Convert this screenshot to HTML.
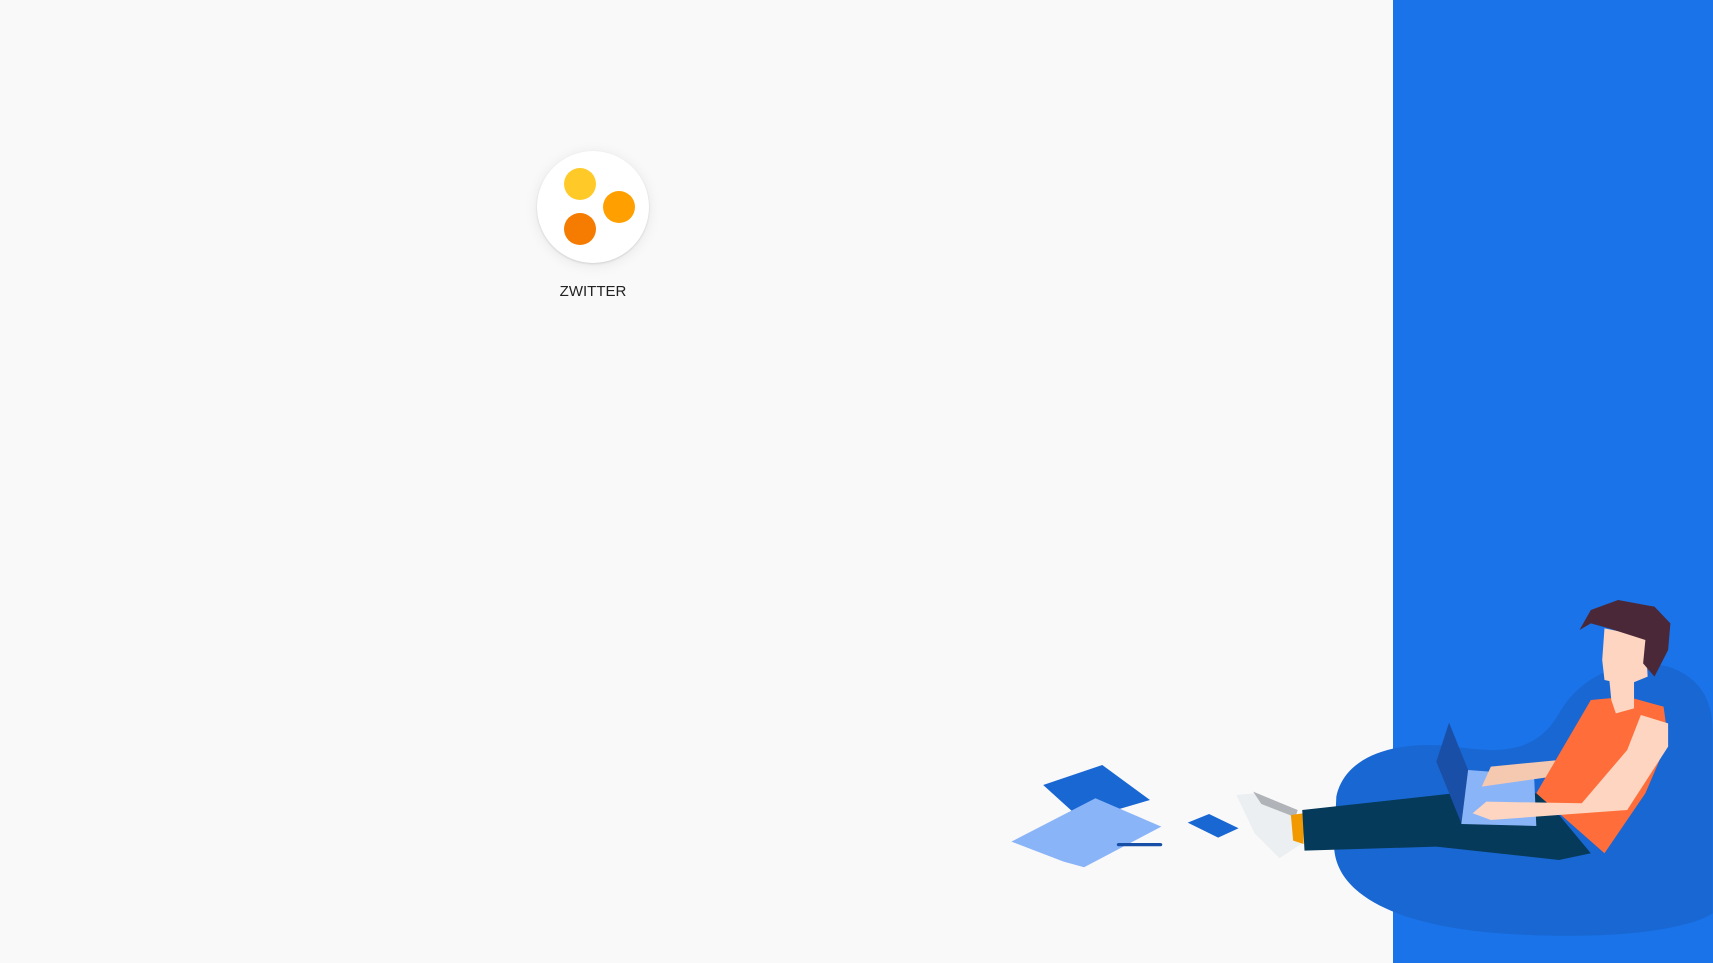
<!DOCTYPE html>
<html><head><meta charset="utf-8"><style>
html,body{margin:0;padding:0;width:1713px;height:963px;overflow:hidden;background:#f9f9f9;font-family:"Liberation Sans",Roboto,sans-serif}
.panel{position:absolute;left:1393px;top:0;width:320px;height:963px;background:#1a73e8}
.logo{position:absolute;left:537px;top:151px;width:112px;height:112px;border-radius:50%;background:#fff;box-shadow:0 2px 14px rgba(0,0,0,0.08),0 1px 2px rgba(0,0,0,0.12)}
.dot{position:absolute;width:32px;height:32px;border-radius:50%}
.lbl{position:absolute;left:493px;top:283px;width:200px;text-align:center;font-size:15px;color:#222}
svg{position:absolute;left:0;top:0}
</style></head><body>
<div class="panel"></div>
<div class="logo">
<div class="dot" style="left:27px;top:17px;background:#ffca28"></div>
<div class="dot" style="left:66px;top:40px;background:#ffa000"></div>
<div class="dot" style="left:27px;top:62px;background:#f57c00"></div>
</div>
<div class="lbl">ZWITTER</div>
<svg width="1713" height="963" viewBox="0 0 1713 963">
<g transform="translate(1000,580) scale(0.4545,0.3333)">
<path d="M740 650 C760 520 880 480 1000 500 C1100 520 1180 520 1230 400 C1280 280 1380 230 1470 260 C1560 300 1568 400 1568 450 L1568 1000 C1500 1060 1300 1080 1100 1060 C900 1040 740 960 735 800 Z" fill="#1967d2"/>
<polygon points="95,615 225,555 330,660 180,720" fill="#1967d2"/>
<polygon points="25,785 210,655 355,740 185,862 140,845" fill="#8ab4f8"/>
<line x1="262" y1="794" x2="352" y2="794" stroke="#174ea6" stroke-width="10" stroke-linecap="round"/>
<polygon points="413,728 460,702 525,745 480,773" fill="#1967d2"/>
<polygon points="520,645 560,640 650,700 665,790 615,835 560,760" fill="#eceff1"/>
<polygon points="557,635 655,690 650,712 575,672" fill="#b0b4b8"/>
<polygon points="640,705 668,700 668,792 645,782" fill="#f29900"/>
<polygon points="665,690 1000,640 1190,640 1300,820 1230,840 960,800 670,812" fill="#063a5a"/>
<polygon points="988,428 960,545 1015,730 1030,570" fill="#1a4fa8"/>
<polygon points="1030,570 1175,585 1180,738 1015,732" fill="#8ab4f8"/>
<polygon points="1270,490 1230,540 1080,560 1060,620 1240,585 1300,500" fill="#f5c8b0"/>
<polygon points="1180,640 1300,360 1380,350 1460,380 1470,480 1420,640 1330,820 1230,700" fill="#ff6d3a"/>
<polygon points="1340,290 1395,290 1395,385 1355,400 1345,360" fill="#fdd5c0"/>
<polygon points="1410,405 1470,430 1470,500 1380,690 1080,720 1040,700 1070,665 1280,670 1380,510" fill="#fdd5c0"/>
<polygon points="1330,145 1420,170 1425,290 1380,315 1330,300 1325,240" fill="#fdd5c0"/>
<polygon points="1275,150 1300,90 1360,60 1440,80 1475,130 1470,210 1440,290 1415,250 1420,180 1340,145 1300,130" fill="#4a2838"/>
</g>
</svg>
</body></html>
